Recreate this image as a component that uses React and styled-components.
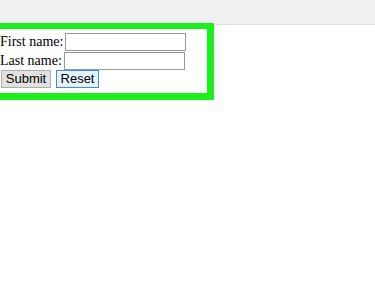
import React from "react";
import styled, { createGlobalStyle } from "styled-components";

const GlobalStyle = createGlobalStyle`
  body {
    margin: 0;
    background: #fff;
    font-family: "Liberation Serif", "Times New Roman", serif;
    font-size: 14px;
    color: #000;
  }
`;

const TopBar = styled.div`
  height: 24px;
  background: #f0f0f0;
  border-bottom: 1px solid #dedede;
`;

const Frame = styled.div`
  width: 207px;
  margin-top: -2px;
  border: 7px solid #1cf01c;
  border-top-width: 6px;
  border-left: none;
  background: #fff;
  padding: 3px 0 5px;
`;

const Row = styled.div`
  display: flex;
  align-items: center;
  gap: ${props => props.gap || 2}px;
  height: 19px;
  line-height: 19px;
`;

const Input = styled.input`
  box-sizing: border-box;
  width: 121px;
  height: 18px;
  margin: 0;
  padding: 1px 2px;
  border: 1px solid #999;
  background: #fff;
`;

const Button = styled.button`
  box-sizing: border-box;
  width: ${props => props.w}px;
  height: 18px;
  margin: 0;
  padding: 0;
  font-family: "Liberation Sans", Arial, sans-serif;
  font-size: 13px;
  line-height: 14px;
  color: #000;
  border: 1px solid ${props => (props.active ? "#3c8fd8" : "#adadad")};
  background: ${props => (props.active ? "#e5f1fb" : "#e1e1e1")};
  border-radius: 0;
`;

const ButtonRow = styled(Row)`
  padding-left: 1px;
  height: 18px;
`;

export default function App() {
  return (
    <>
      <GlobalStyle />
      <TopBar />
      <Frame>
        <form onSubmit={e => e.preventDefault()}>
          <Row>
            <span>First name:</span>
            <Input type="text" name="firstname" />
          </Row>
          <Row>
            <span>Last name:</span>
            <Input type="text" name="lastname" />
          </Row>
          <ButtonRow gap={5}>
            <Button type="submit" w={50}>Submit</Button>
            <Button type="reset" active w={43}>Reset</Button>
          </ButtonRow>
        </form>
      </Frame>
    </>
  );
}
